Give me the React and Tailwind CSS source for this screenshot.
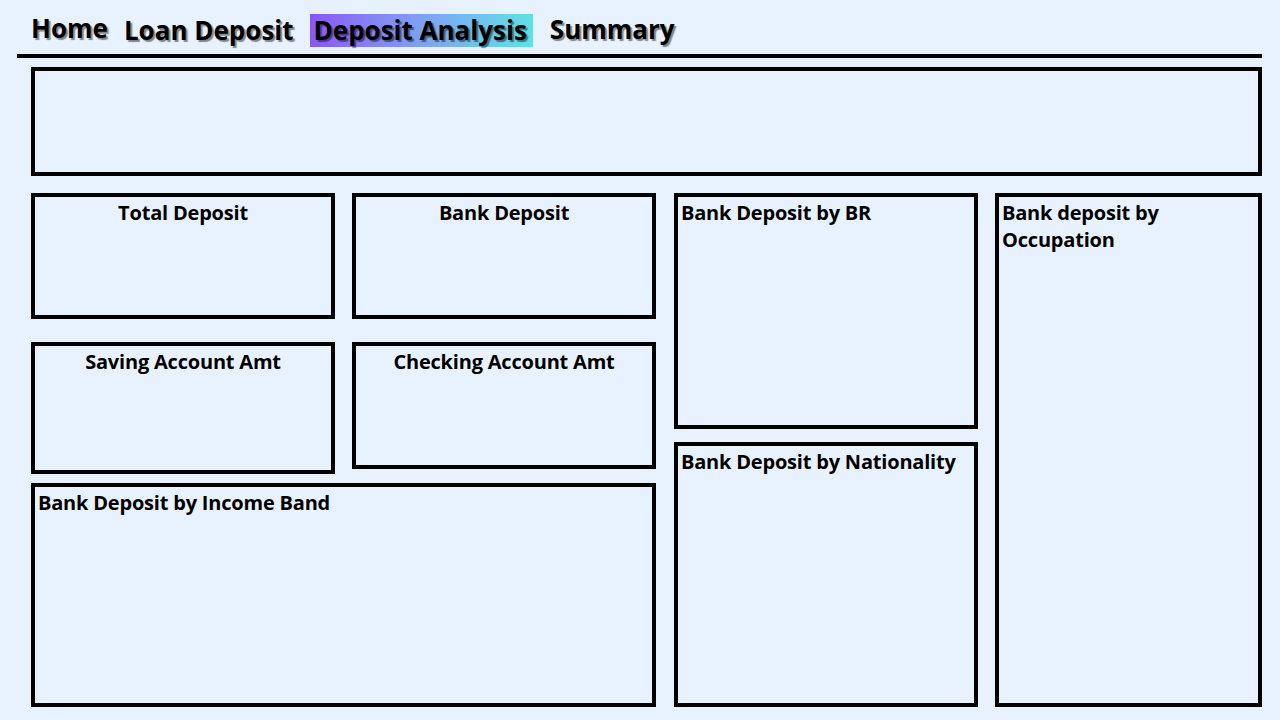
import React from "react";

const titleFont = { fontFamily: '"Open Sans", "Noto Sans", sans-serif' };

function Box({ className = "", title, center = false, children }) {
  return (
    <div className={`box-border border-4 border-black ${className}`}>
      {title && (
        <div
          className={`text-[20px] leading-[27px] font-bold text-black tracking-[-0.2px] pt-[2px] ${center ? "text-center" : "pl-[3px]"}`}
          style={titleFont}
        >
          {children || title}
        </div>
      )}
    </div>
  );
}

export default function App() {
  const navCls =
    "text-[26px] leading-[32px] font-bold text-black [text-shadow:2px_2px_1px_rgba(0,0,0,0.45)]";
  return (
    <div className="w-[1280px] h-[720px] bg-[#e8f2fe] overflow-hidden relative" style={{ fontFamily: '"Open Sans", sans-serif' }}>
      {/* Nav */}
      <div className="flex items-center h-[54px] pl-[31px]">
        <span className={`${navCls} mt-[2px]`}>Home</span>
        <span className={`${navCls} ml-[16px] mt-[6px]`}>Loan Deposit</span>
        <span className="ml-[16px] mt-[6px] h-[33px] flex items-center pl-[4px] pr-[6px] bg-gradient-to-r from-[#8a55f7] to-[#5ce1e6]">
          <span className={navCls}>Deposit Analysis</span>
        </span>
        <span className={`${navCls} ml-[17px] mt-[3px]`}>Summary</span>
      </div>
      <div className="ml-[17px] w-[1245px] h-[4px] bg-black"></div>

      <div className="pl-[31px]">
        <Box className="mt-[9px] w-[1231px] h-[109px]" />

        <div className="flex mt-[17px]">
          {/* left two columns */}
          <div className="flex flex-col w-[625px]">
            <div className="flex gap-[17px]">
              <Box className="w-[304px] h-[126px]" title="Total Deposit" center />
              <Box className="w-[304px] h-[126px]" title="Bank Deposit" center />
            </div>
            <div className="flex gap-[17px] mt-[23px] items-start">
              <Box className="w-[304px] h-[132px]" title="Saving Account Amt" center />
              <Box className="w-[304px] h-[127px]" title="Checking Account Amt" center />
            </div>
            <Box className="mt-[9px] w-[625px] h-[224px]" title="Bank Deposit by Income Band" />
          </div>

          {/* third column */}
          <div className="flex flex-col ml-[18px] w-[304px]">
            <Box className="w-[304px] h-[236px]" title="Bank Deposit by BR" />
            <Box className="mt-[13px] w-[304px] h-[265px]" title="Bank Deposit by Nationality" />
          </div>

          {/* fourth column */}
          <Box className="ml-[17px] w-[267px] h-[514px]" title="x">
            Bank deposit by
            <br />
            Occupation
          </Box>
        </div>
      </div>
    </div>
  );
}
